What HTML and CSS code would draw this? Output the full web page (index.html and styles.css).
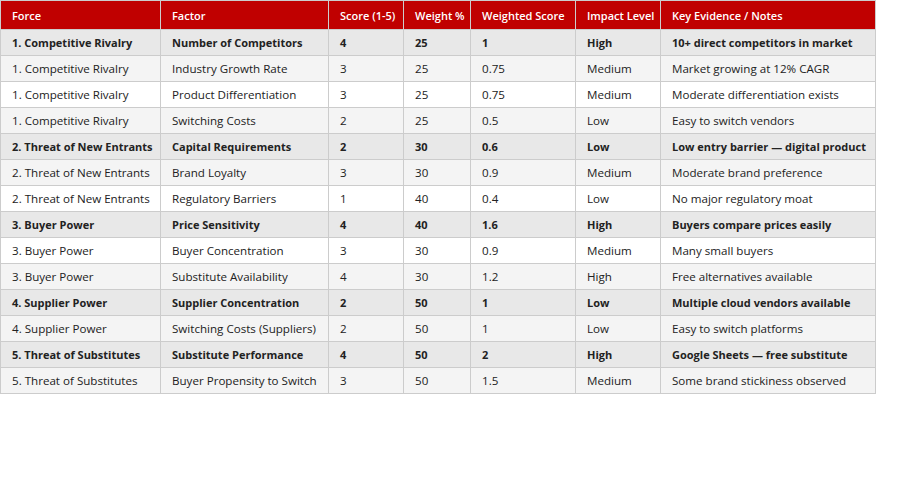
FILE: index.html
```html
<!DOCTYPE html>
<html>
<head>
<meta charset="utf-8">
<link rel="stylesheet" href="styles.css">
</head>
<body>
<table class="grid">
  <colgroup>
    <col class="c1"><col class="c2"><col class="c3"><col class="c4"><col class="c5"><col class="c6"><col class="c7">
  </colgroup>
  <thead>
    <tr><th>Force</th><th>Factor</th><th>Score (1-5)</th><th>Weight %</th><th>Weighted Score</th><th>Impact Level</th><th>Key Evidence / Notes</th></tr>
  </thead>
  <tbody>
    <tr class="lead"><td>1. Competitive Rivalry</td><td>Number of Competitors</td><td>4</td><td>25</td><td>1</td><td>High</td><td>10+ direct competitors in market</td></tr>
    <tr><td>1. Competitive Rivalry</td><td>Industry Growth Rate</td><td>3</td><td>25</td><td>0.75</td><td>Medium</td><td>Market growing at 12% CAGR</td></tr>
    <tr><td>1. Competitive Rivalry</td><td>Product Differentiation</td><td>3</td><td>25</td><td>0.75</td><td>Medium</td><td>Moderate differentiation exists</td></tr>
    <tr><td>1. Competitive Rivalry</td><td>Switching Costs</td><td>2</td><td>25</td><td>0.5</td><td>Low</td><td>Easy to switch vendors</td></tr>
    <tr class="lead"><td>2. Threat of New Entrants</td><td>Capital Requirements</td><td>2</td><td>30</td><td>0.6</td><td>Low</td><td>Low entry barrier — digital product</td></tr>
    <tr><td>2. Threat of New Entrants</td><td>Brand Loyalty</td><td>3</td><td>30</td><td>0.9</td><td>Medium</td><td>Moderate brand preference</td></tr>
    <tr><td>2. Threat of New Entrants</td><td>Regulatory Barriers</td><td>1</td><td>40</td><td>0.4</td><td>Low</td><td>No major regulatory moat</td></tr>
    <tr class="lead"><td>3. Buyer Power</td><td>Price Sensitivity</td><td>4</td><td>40</td><td>1.6</td><td>High</td><td>Buyers compare prices easily</td></tr>
    <tr><td>3. Buyer Power</td><td>Buyer Concentration</td><td>3</td><td>30</td><td>0.9</td><td>Medium</td><td>Many small buyers</td></tr>
    <tr><td>3. Buyer Power</td><td>Substitute Availability</td><td>4</td><td>30</td><td>1.2</td><td>High</td><td>Free alternatives available</td></tr>
    <tr class="lead"><td>4. Supplier Power</td><td>Supplier Concentration</td><td>2</td><td>50</td><td>1</td><td>Low</td><td>Multiple cloud vendors available</td></tr>
    <tr><td>4. Supplier Power</td><td>Switching Costs (Suppliers)</td><td>2</td><td>50</td><td>1</td><td>Low</td><td>Easy to switch platforms</td></tr>
    <tr class="lead"><td>5. Threat of Substitutes</td><td>Substitute Performance</td><td>4</td><td>50</td><td>2</td><td>High</td><td>Google Sheets — free substitute</td></tr>
    <tr><td>5. Threat of Substitutes</td><td>Buyer Propensity to Switch</td><td>3</td><td>50</td><td>1.5</td><td>Medium</td><td>Some brand stickiness observed</td></tr>
  </tbody>
</table>
</body>
</html>
```

FILE: styles.css
```css
html, body {
  margin: 0;
  padding: 0;
  background: #ffffff;
}
.grid {
  border-collapse: collapse;
  table-layout: fixed;
  width: 875px;
  font-family: "Open Sans", "Noto Sans", sans-serif;
  font-size: 11.6px;
  color: #222222;
}
.c1 { width: 160px; }
.c2 { width: 168px; }
.c3 { width: 75px; }
.c4 { width: 67px; }
.c5 { width: 105px; }
.c6 { width: 85px; }
.c7 { width: 215px; }
.grid th, .grid td {
  border: 1px solid #cccccc;
  padding: 0 0 0 11px;
  text-align: left;
  white-space: nowrap;
  overflow: hidden;
}
.grid th {
  background: #c00000;
  color: #ffffff;
  font-weight: 600;
  font-size: 11px;
  height: 28px;
}
.grid td {
  height: 25px;
}
.grid tbody tr:nth-child(even) td {
  background: #f4f4f4;
}
.grid tbody tr.lead td {
  background: #e8e8e8;
  font-weight: 700;
  font-size: 11px;
}
```
